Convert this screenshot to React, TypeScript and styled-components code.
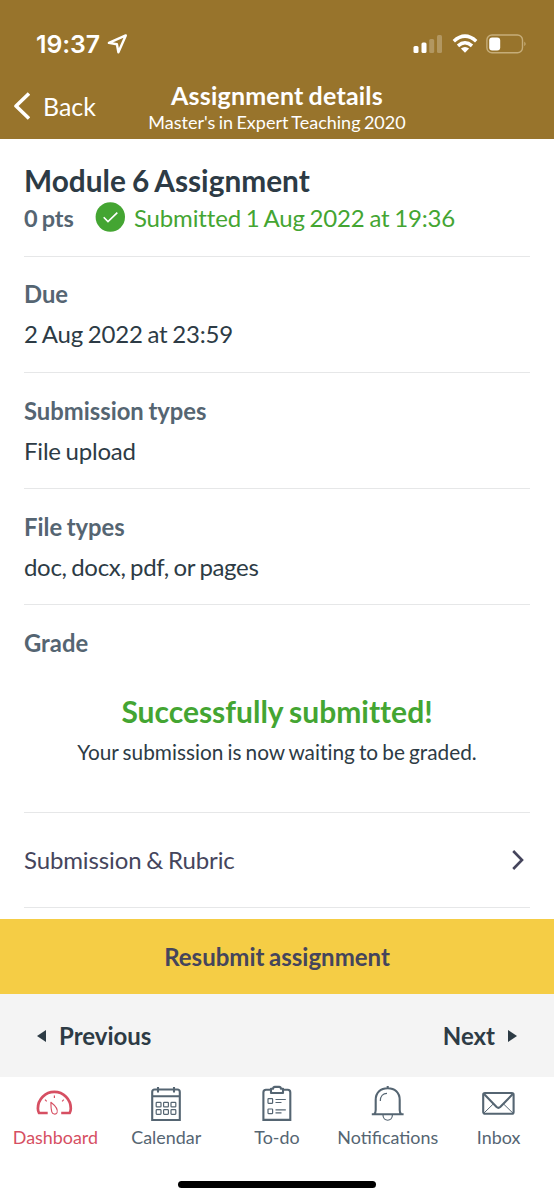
import React from "react";
import styled, { createGlobalStyle } from "styled-components";

const GlobalStyle = createGlobalStyle`
  * { box-sizing: border-box; }
  body { margin: 0; background: #fff; font-family: Lato, sans-serif; word-spacing: -1.2px; -webkit-font-smoothing: antialiased; }
  svg { display: block; flex: none; }
`;

const slate = "#556572";
const ink = "#2d3b45";
const green = "#44a532";

const Screen = styled.div`
  width: 554px;
  height: 1200px;
  display: flex;
  flex-direction: column;
  overflow: hidden;
  background: #fff;
  font-variant-ligatures: none;
`;

const Header = styled.header`
  height: 139px;
  flex: none;
  background: #98742c;
  color: #fff;
`;

const StatusBar = styled.div`
  height: 80px;
  padding: 8px 27px 0 36px;
  display: flex;
  align-items: center;
  justify-content: space-between;
`;

const Clock = styled.div`
  display: flex;
  align-items: center;
  gap: 7px;
  font: 600 24.8px/30px Inter, sans-serif;
  letter-spacing: -0.1px;
`;

const Indicators = styled.div`
  display: flex;
  align-items: center;
  gap: 8.5px;
`;

const NavBar = styled.div`
  height: 59px;
  display: grid;
  grid-template-columns: 130px 1fr 130px;
`;

const BackButton = styled.div`
  display: flex;
  align-items: center;
  gap: 13px;
  height: 52px;
  padding-left: 13px;
  font-size: 24.9px;
`;

const Heading = styled.div`
  display: flex;
  flex-direction: column;
  align-items: center;
  white-space: nowrap;
`;

const HeadingTitle = styled.div`
  font-size: 25px;
  line-height: 30px;
  font-weight: 700;
  letter-spacing: 0.2px;
`;

const HeadingSubtitle = styled.div`
  margin-top: 1px;
  font-size: 18px;
  line-height: 23px;
`;

const Content = styled.main`
  height: 780px;
  flex: none;
  padding: 0 24px;
`;

const Section = styled.section<{ $height: number; $top: number }>`
  height: ${(p) => p.$height}px;
  padding-top: ${(p) => p.$top}px;
  border-bottom: 1px solid #e6e7e8;
  white-space: nowrap;
`;

const Title = styled.h1`
  margin: 0;
  font-size: 29.8px;
  line-height: 36px;
  font-weight: 700;
  color: ${ink};
`;

const StatusLine = styled.div`
  display: flex;
  align-items: center;
  height: 36px;
`;

const Points = styled.span`
  width: 71px;
  font-size: 23.5px;
  line-height: 30px;
  padding-top: 2px;
  font-weight: 700;
  letter-spacing: -0.15px;
  color: ${slate};
`;

const Submitted = styled.span`
  margin-left: 9px;
  padding-top: 2px;
  line-height: 30px;
  font-size: 24px;
  letter-spacing: -0.16px;
  color: ${green};
`;

const Label = styled.h2`
  margin: 0 0 10px;
  font-size: 23.8px;
  line-height: 30px;
  font-weight: 700;
  color: ${slate};
`;

const Value = styled.div<{ $tracking: number }>`
  font-size: 24px;
  line-height: 30px;
  letter-spacing: ${(p) => p.$tracking}px;
  color: ${ink};
`;

const Success = styled.div`
  margin-top: 33px;
  text-align: center;
  font-size: 30px;
  line-height: 40px;
  font-weight: 700;
  color: ${green};
`;

const SuccessNote = styled.div`
  margin-top: 6px;
  text-align: center;
  font-size: 20.8px;
  line-height: 30px;
  color: ${ink};
`;

const LinkRow = styled.div`
  height: 95px;
  display: flex;
  align-items: center;
  justify-content: space-between;
  padding-right: 6px;
  border-bottom: 1px solid #e6e7e8;
  color: #45455c;
`;

const LinkText = styled.span`
  padding-bottom: 2px;
  font-size: 24px;
  letter-spacing: -0.12px;
`;

const Resubmit = styled.div`
  height: 75px;
  flex: none;
  display: flex;
  align-items: center;
  justify-content: center;
  background: #f5cd45;
  color: #45455c;
  font-size: 24px;
  font-weight: 700;
`;

const Pager = styled.div`
  height: 83px;
  flex: none;
  display: flex;
  align-items: center;
  justify-content: space-between;
  padding: 0 37px;
  background: #f4f4f4;
`;

const PagerLink = styled.div`
  display: flex;
  align-items: center;
  gap: 13px;
  font-size: 24px;
  font-weight: 700;
  color: ${ink};
`;

const Tabs = styled.nav`
  height: 103px;
  flex: none;
  display: grid;
  grid-template-columns: repeat(5, 1fr);
  padding-top: 6px;
  font-variant-ligatures: normal;
`;

const Tab = styled.div<{ $active?: boolean }>`
  display: flex;
  flex-direction: column;
  align-items: center;
  gap: 3px;
  font-size: 17.9px;
  line-height: 22px;
  white-space: nowrap;
  color: ${(p) => (p.$active ? "#d64f62" : slate)};
`;

const HomeIndicator = styled.div`
  width: 198px;
  height: 7px;
  flex: none;
  align-self: center;
  margin-top: 1px;
  border-radius: 4px;
  background: #000;
`;

const TabIcon = ({ children }: { children: React.ReactNode }) => (
  <svg width="40" height="40" viewBox="0 0 40 40" fill="none" stroke="currentColor" strokeWidth="2.1" strokeLinejoin="round">
    {children}
  </svg>
);

const DashboardIcon = () => (
  <TabIcon>
    <path d="M12.7 30H4.1Q2.9 27.8 2.9 25.4A16.45 16.45 0 0 1 35.8 25.4Q35.8 27.8 34.6 30H26.2" strokeWidth="2.7" strokeLinejoin="miter" />
    <path d="M15.9 19.2C19.5 22 23.3 26.5 22 29.8C20.8 31.8 17.5 31.4 16.8 28.8C16 26 15.9 22.5 15.9 19.2Z" strokeWidth="1.1" />
    <path d="M19.4 12.6v2.4M10 16.6l1.7 1.7M28.8 16.6l-1.7 1.7" strokeWidth="1.2" />
  </TabIcon>
);

const CalendarIcon = () => (
  <TabIcon>
    <path d="M6.2 14V9Q6.2 6.5 8.7 6.5H31.3Q33.8 6.5 33.8 9V14M6.2 13.3H33.8M6.2 13V37H33.8V13M12 4V9.5M28 4V9.5" strokeLinejoin="miter" />
    <g strokeWidth="1.2">
      {[19.3, 26.7].map((y) =>
        [10.2, 17.6, 25].map((x) => <rect key={`${x}-${y}`} x={x} y={y} width="4.8" height="4.6" rx=".7" />)
      )}
    </g>
  </TabIcon>
);

const TodoIcon = () => (
  <TabIcon>
    <path d="M14 6.8H9Q6.4 6.8 6.4 9.4V36.9H33.3V9.4Q33.3 6.8 30.7 6.8H26" strokeLinejoin="miter" />
    <path d="M14 5.8H16Q16.3 3.9 17.8 3.9H22.2Q23.7 3.9 24 5.8H26V10H14Z" />
    <g strokeWidth="1.2">
      <rect x="11" y="15.7" width="4.6" height="4.6" rx=".5" />
      <rect x="11" y="26" width="4.6" height="4.6" rx=".5" />
      <path d="M18.5 16.5H28.8M18.5 19.5H24.5M18.5 26.8H28.8M18.5 29.8H24.5" />
    </g>
  </TabIcon>
);

const BellIcon = () => (
  <TabIcon>
    <path d="M3.8 31.2H35.6M6.2 31Q7.7 30 7.7 27V17C7.7 9.5 12.7 5.3 19.7 5.3S31.7 9.5 31.7 17V27Q31.7 30 33.2 31M19.7 2.9V5.5" />
    <path d="M12.3 18C12.3 13.5 15 10.4 19 10.4M15 32C15 39 24.4 39 24.4 32" strokeWidth="1.2" />
  </TabIcon>
);

const InboxIcon = () => (
  <TabIcon>
    <rect x="4.2" y="10" width="30.4" height="20.8" rx="1.8" />
    <path d="M4.8 10.8L17.6 24Q19.4 25.6 21.2 24L34 10.8" />
    <path d="M4.8 30.2L13.9 21.3M34 30.2L24.9 21.3" strokeWidth="1" />
  </TabIcon>
);

const LocationIcon = () => (
  <svg width="21" height="20" viewBox="0 0 21 20" fill="none" stroke="#fff" strokeWidth="2.4" strokeLinejoin="round">
    <path d="M18.8 1.4L1.9 8.9L9.9 10.3L11.4 18.2Z" />
  </svg>
);

const SignalIcon = () => (
  <svg width="30" height="20" viewBox="0 0 30 20" fill="#fff">
    <rect x=".5" y="12" width="5" height="7" rx="1.5" />
    <rect x="8.5" y="8.5" width="5" height="10.5" rx="1.5" />
    <rect x="16.2" y="5" width="5" height="14" rx="1.5" opacity=".25" />
    <rect x="24" y="1" width="5" height="18" rx="1.5" opacity=".25" />
  </svg>
);

const WifiIcon = () => (
  <svg width="26" height="20" viewBox="0 0 26 20" fill="none" stroke="#fff" strokeWidth="3.5">
    <path d="M1.8 7.2Q13-2.8 24.2 7.2M6 11.8Q13 5.8 20 11.8" />
    <path d="M8.9 14.5Q13 11.4 17.1 14.5L13 18.8Z" fill="#fff" stroke="none" />
  </svg>
);

const BatteryIcon = () => (
  <svg width="41" height="20" viewBox="0 0 41 20" fill="none">
    <rect x=".9" y="1" width="35.6" height="17.8" rx="5" stroke="#c6ad79" strokeWidth="1.4" />
    <rect x="3.2" y="3.4" width="11" height="13" rx="3" fill="#fff" />
    <path d="M38.3 7.5Q41 9.9 38.3 12.3Z" fill="#c6ad79" />
  </svg>
);

const BackIcon = () => (
  <svg width="17" height="28" viewBox="0 0 17 28" fill="none" stroke="#fff" strokeWidth="3.6">
    <path d="M16 1.5L3 14L16 26.5" strokeLinejoin="round" />
  </svg>
);

const CheckIcon = () => (
  <svg width="30" height="30" viewBox="0 0 30 30" fill="none">
    <circle cx="15.3" cy="15" r="14.7" fill={green} />
    <path d="M8.7 15.3L13 19.6L22.3 10.6" stroke="#fff" strokeWidth="1.6" />
  </svg>
);

const DisclosureIcon = () => (
  <svg width="12" height="20" viewBox="0 0 12 20" fill="none" stroke="currentColor" strokeWidth="2.6">
    <path d="M1.2 1L10 10L1.2 19" />
  </svg>
);

const ArrowIcon = ({ next }: { next?: boolean }) => (
  <svg width="9" height="12" viewBox="0 0 9 12" fill="currentColor">
    <path d={next ? "M0 0L9 6L0 12Z" : "M9 0L0 6L9 12Z"} />
  </svg>
);

const details = [
  { label: "Due", value: "2 Aug 2022 at 23:59", top: 22, tracking: -0.18 },
  { label: "Submission types", value: "File upload", top: 23, tracking: -0.2 },
  { label: "File types", value: "doc, docx, pdf, or pages", top: 23, tracking: -0.33 },
];

const tabs = [
  { label: "Dashboard", Icon: DashboardIcon },
  { label: "Calendar", Icon: CalendarIcon },
  { label: "To-do", Icon: TodoIcon },
  { label: "Notifications", Icon: BellIcon },
  { label: "Inbox", Icon: InboxIcon },
];

export default function App() {
  return (
    <Screen>
      <GlobalStyle />
      <Header>
        <StatusBar>
          <Clock>19:37<LocationIcon /></Clock>
          <Indicators><SignalIcon /><WifiIcon /><BatteryIcon /></Indicators>
        </StatusBar>
        <NavBar>
          <BackButton><BackIcon />Back</BackButton>
          <Heading>
            <HeadingTitle>Assignment details</HeadingTitle>
            <HeadingSubtitle>Master's in Expert Teaching 2020</HeadingSubtitle>
          </Heading>
        </NavBar>
      </Header>
      <Content>
        <Section $height={118} $top={24}>
          <Title>Module 6 Assignment</Title>
          <StatusLine>
            <Points>0 pts</Points>
            <CheckIcon />
            <Submitted>Submitted 1 Aug 2022 at 19:36</Submitted>
          </StatusLine>
        </Section>
        {details.map((d) => (
          <Section key={d.label} $height={116} $top={d.top}>
            <Label>{d.label}</Label>
            <Value $tracking={d.tracking}>{d.value}</Value>
          </Section>
        ))}
        <Section $height={208} $top={23}>
          <Label>Grade</Label>
          <Success>Successfully submitted!</Success>
          <SuccessNote>Your submission is now waiting to be graded.</SuccessNote>
        </Section>
        <LinkRow><LinkText>Submission &amp; Rubric</LinkText><DisclosureIcon /></LinkRow>
      </Content>
      <Resubmit>Resubmit assignment</Resubmit>
      <Pager>
        <PagerLink><ArrowIcon />Previous</PagerLink>
        <PagerLink>Next<ArrowIcon next /></PagerLink>
      </Pager>
      <Tabs>
        {tabs.map(({ label, Icon }, i) => (
          <Tab key={label} $active={i === 0}><Icon />{label}</Tab>
        ))}
      </Tabs>
      <HomeIndicator />
    </Screen>
  );
}
